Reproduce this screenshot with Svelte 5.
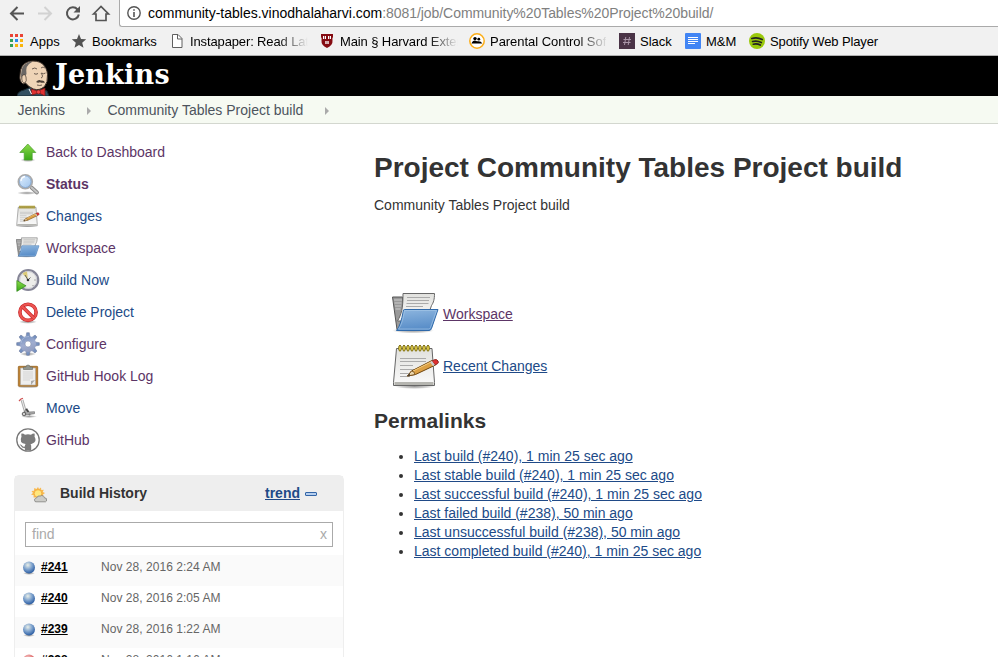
<script>
  const bookmarks = [
    { icon: 'apps', label: 'Apps', w: 62 },
    { icon: 'star', label: 'Bookmarks', w: 98, ls: -0.02 },
    { icon: 'page', label: 'Instapaper: Read Lat', w: 150, fade: true, ls: -0.13 },
    { icon: 'shield', label: 'Main § Harvard Exter', w: 150, fade: true, ls: -0.11 },
    { icon: 'people', label: 'Parental Control Sof', w: 150, fade: true, ls: -0.04 },
    { icon: 'slack', label: 'Slack', w: 66 },
    { icon: 'doc', label: 'M&M', w: 64 },
    { icon: 'spotify', label: 'Spotify Web Player', w: 160, ls: -0.13 }
  ];
  const tasks = [
    { icon: 'up', label: 'Back to Dashboard', visited: true },
    { icon: 'search', label: 'Status', visited: true, bold: true },
    { icon: 'notepad', label: 'Changes' },
    { icon: 'folder', label: 'Workspace', visited: true },
    { icon: 'clock', label: 'Build Now' },
    { icon: 'stop', label: 'Delete Project' },
    { icon: 'gear', label: 'Configure', visited: true },
    { icon: 'clipboard', label: 'GitHub Hook Log', visited: true },
    { icon: 'move', label: 'Move' },
    { icon: 'github', label: 'GitHub', visited: true }
  ];
  const builds = [
    { id: '#241', date: 'Nov 28, 2016 2:24 AM', ball: 'blue' },
    { id: '#240', date: 'Nov 28, 2016 2:05 AM', ball: 'blue' },
    { id: '#239', date: 'Nov 28, 2016 1:22 AM', ball: 'blue' },
    { id: '#238', date: 'Nov 28, 2016 1:16 AM', ball: 'red' }
  ];
  const permalinks = [
    'Last build (#240), 1 min 25 sec ago',
    'Last stable build (#240), 1 min 25 sec ago',
    'Last successful build (#240), 1 min 25 sec ago',
    'Last failed build (#238), 50 min ago',
    'Last unsuccessful build (#238), 50 min ago',
    'Last completed build (#240), 1 min 25 sec ago'
  ];
  const appColors = ['#ea4335', '#ea4335', '#ea4335', '#34a05a', '#2a8cf0', '#f9b50b', '#34a05a', '#f9b50b', '#f9b50b'];
</script>

{#snippet folder(size)}
  <svg width={size} height={size} viewBox="0 0 48 48">
    <ellipse cx="21" cy="40.500" rx="21" ry="3" fill="url(#shadow)" />
    <path d="M.5 7h10v32.500H5Z" fill="#999" stroke="#555" />
    <path d="M2 10h8M2.500 13h7M3 16h6M3.500 19h5" stroke="#ccc" />
    <path d="M11 3.500h31.500c0 6-1 9-3 12L34 31H5.500c4-7 5.500-12 5.500-27.500Z" fill="url(#paper)" stroke="#686868" />
    <path d="M15 7.500h23M15 10.500h22M14.500 13.500h22M14 16.500h17" stroke="#aaa" />
    <path d="M11.500 20q.2-.500 1-.500h33.500l-6.500 19q-.7 2-2.500 2H4.500q4-4 7-20.500Z" fill="url(#blueFolder)" stroke="#2f69aa" />
    <path d="M12.500 20.500h32l-6 17q-.5 1.500-2 1.500H6.500q4-5 6-18.500Z" fill="none" stroke="#a6c7e8" opacity=".65" />
  </svg>
{/snippet}

{#snippet notepad(size)}
  <svg width={size} height={size} viewBox="0 0 48 48">
    <ellipse cx="22.500" cy="44.500" rx="20" ry="2.500" fill="url(#shadow)" />
    <path d="M4.500 6.500h35.500l2.500 34v3h-41v-3Z" fill="url(#paper)" stroke="#666" stroke-linejoin="round" />
    <path d="M2.500 41.500h39" stroke="#b5b5b0" stroke-width="3" />
    <path d="M8 16.500h26M8 19.500h26M8 23.500h13M8 27.500h24M8 31.500h18M8 34.500h10" stroke="#aaa" />
    {#each [8, 12, 16, 20, 24, 28, 32, 36] as x}
      <ellipse cx={x} cy="6.200" rx="1.300" ry="3" fill="#f2df54" stroke="#77670c" />
    {/each}
    <path d="m15.500 34 4-5L40 18.500l3.500 4.500-20 9.500Z" fill="#dca044" stroke="#70450d" />
    <path d="m21 29 19-9.500" stroke="#f5ce83" />
    <path d="m15.500 34 4-5q3 0 3.500 3.500Z" fill="#ead5ac" stroke="#70450d" stroke-width=".8" />
    <path d="m15.500 34 2-2.300.7 1.700Z" fill="#333" />
    <path d="m40 19 2.500-1.300q2.500-.5 3.500 1.300t-.5 2.700l-2.500 1.300Z" fill="#df3030" stroke="#8c2720" />
    <path d="m39 19.500 3 4" stroke="#ccc" stroke-width="2.200" />
  </svg>
{/snippet}

{#snippet bookmarkIcon(kind)}
  <svg width="16" height="16" viewBox="0 0 16 16">
    {#if kind === 'apps'}
      {#each appColors as c, i}
        <rect x={1 + (i % 3) * 5} y={1 + Math.floor(i / 3) * 5} width="3" height="3" fill={c} />
      {/each}
    {:else if kind === 'star'}
      <path d="m8 1 2 4.900 5.200.4-4 3.400 1.300 5.100L8 12l-4.500 2.800 1.300-5.100-4-3.400L6 5.900Z" fill="#525252" />
    {:else if kind === 'page'}
      <path d="M3.500 1.500h5.500l4 4v9h-9.500Z" fill="#fff" stroke="#606060" /><path d="M8.500 1.500v4.500h4.500" fill="none" stroke="#606060" />
    {:else if kind === 'shield'}
      <path d="M2 1h12v3q-1 1-.5 3.500Q14 12 8 15 2 12 2.500 7.500 3 5 2 4Z" fill="#850b12" />
      <path d="M4 3h3v3H4Zm5 0h3v3H9ZM6.300 8h3.400v3H6.300Z" fill="#fff" /><path d="M5.500 3v3M10.500 3v3M8 8v3" stroke="#850b12" stroke-width=".7" />
    {:else if kind === 'people'}
      <circle cx="8" cy="8" r="7.200" fill="#fff" stroke="#fcae18" stroke-width="1.500" />
      <circle cx="6" cy="5.600" r="1.700" fill="#000" /><circle cx="9.800" cy="6.200" r="1.400" fill="#000" />
      <path d="M2.500 10.500q1-3 3.500-3l2 .8q4-.8 5.300 2.200Z" fill="#000" />
    {:else if kind === 'slack'}
      <path d="M0 0h16v16H0Z" fill="#4a3346" /><path d="m6.800 4-1.300 8M10.500 4l-1.300 8M4.500 6.500h7.500M4 9.500h7.500" stroke="#a995a7" />
    {:else if kind === 'doc'}
      <rect width="16" height="16" rx="1" fill="#4285f4" /><path d="M3 4.500h10M3 6.500h10M3 8.500h10M3 10.500h7" stroke="#fff" />
    {:else}
      <circle cx="8" cy="8" r="8" fill="#9ac90b" /><path d="M2.800 5.500q5.500-1.700 10.400 1M3.600 8.500q4.500-1.200 8.700 1M4.300 11.200q3.800-1 7 .9" fill="none" stroke="#222" stroke-width="1.700" stroke-linecap="round" />
    {/if}
  </svg>
{/snippet}

{#snippet taskIcon(kind)}
  {#if kind === 'folder'}{@render folder(24)}
  {:else if kind === 'notepad'}{@render notepad(24)}
  {:else}
    <svg width="24" height="24" viewBox="0 0 24 24">
      {#if kind === 'up'}
        <ellipse cx="12" cy="20" rx="7.500" ry="2" fill="url(#shadow)" />
        <path d="m11.800 4 8 8.500h-3.600V20h-8v-7.500H3.800Z" fill="url(#green)" stroke="#4a9d2c" stroke-width=".7" />
      {:else if kind === 'search'}
        <ellipse cx="11" cy="21" rx="10" ry="1.800" fill="url(#shadow)" />
        <path d="m15.500 15.500 5.500 5" stroke="#888" stroke-width="3.800" stroke-linecap="round" /><path d="m15.500 15.500 5.500 5" stroke="#c4c4c4" stroke-width="2" stroke-linecap="round" />
        <circle cx="9.300" cy="9.700" r="7" fill="url(#lens)" stroke="#aaa" stroke-width="1.600" /><circle cx="9.300" cy="9.700" r="5.800" fill="none" stroke="#7798c2" stroke-width=".7" />
        <path d="M5 9q0-4 4-4.500" stroke="#fff" fill="none" stroke-width="1.300" />
      {:else if kind === 'clock'}
        <circle cx="12.200" cy="12" r="10" fill="#ededea" stroke="#858596" stroke-width="2.200" /><circle cx="12.200" cy="12" r="8.500" fill="none" stroke="#cbcbd3" />
        <path d="M12 12 6.500 5.500q2-2 4.500-2Z" fill="#dccb78" /><path d="m9 7 3 5 2.500-2.500M18.500 12h1M16.500 17l.7.700" stroke="#666" fill="none" /><circle cx="12" cy="12" r="1.300" fill="#333" />
        <path d="m.8 12.500 9.300 5.300-9.300 5.600Z" fill="url(#green)" stroke="#267f12" stroke-width=".6" />
      {:else if kind === 'stop'}
        <ellipse cx="12" cy="21.800" rx="9" ry="2" fill="url(#shadow)" /><circle cx="12" cy="12.300" r="8.100" fill="#fff" stroke="#c3272b" stroke-width="3.600" /><circle cx="12" cy="12.300" r="8.100" fill="none" stroke="#ed5551" stroke-width="2.300" /><path d="m6.500 6.800 11 11" stroke="#c51e24" stroke-width="3.500" /><path d="m6.300 6.600 11.400 11.400" stroke="#ed5551" stroke-width="2.300" />
      {:else if kind === 'gear'}
        <ellipse cx="12" cy="22" rx="8" ry="2" fill="url(#shadow)" />
        <g fill="url(#gearFill)" stroke="#7582a3" stroke-width=".6">
          {#each [0, 45, 90, 135, 180, 225, 270, 315] as a}<path d="m10 5 .7-4.300h2.600L14 5Z" transform={`rotate(${a} 12 12)`} />{/each}
        </g>
        <circle cx="12" cy="12" r="5.500" fill="none" stroke="url(#gearFill)" stroke-width="5.200" /><path d="M5 11Q6 4.500 13 4.500" stroke="#b4c2de" fill="none" stroke-width=".7" /><circle cx="12" cy="12" r="3" fill="#fff" stroke="#7d8aab" stroke-width=".6" />
      {:else if kind === 'clipboard'}
        <ellipse cx="12" cy="22.800" rx="10" ry="1.200" fill="#000" opacity=".2" /><rect x="2.300" y="2.300" width="19.400" height="20" rx=".7" fill="#bd8132" stroke="#8f5c19" stroke-width=".7" /><path d="M4.500 4h15v17h-15Z" fill="#eee" stroke="#aaa" stroke-width=".6" /><path d="M7 8h10M7 10h10M7 12h10M7 14h10M7 16h7" stroke="#d5d5d5" /><path d="m19 16-4 1v4Z" fill="#aaa" /><path d="M7.500 5.500V3h2.500Q10 1 12 1t2 2h2.500v2.500Z" fill="#92968f" stroke="#666b63" stroke-width=".6" />
      {:else if kind === 'move'}
        <ellipse cx="13" cy="20.500" rx="8" ry="1.500" fill="url(#shadow)" /><path d="m6 4 3.500 12" stroke="#aaa" stroke-width="2.800" /><path d="m6 4 3.500 12" stroke="#eee" stroke-width="1" /><path d="m3 5 2-2 2-.7" fill="none" stroke="#cf5050" stroke-width="1.200" /><path d="m8.500 15 2.500-2.500 2 3.500 5.500-.3v2L9 19Z" fill="#aaa" stroke="#666" stroke-width=".6" /><path d="m10 13 2.500 3" stroke="#444" stroke-width="1.500" /><circle cx="8" cy="18" r="1.800" fill="#ccc" stroke="#444" stroke-width=".8" /><circle cx="13.500" cy="18.500" r="1" fill="#777" />
      {:else}
        <circle cx="12" cy="12" r="11.200" fill="#fff" stroke="#777" stroke-width="1.300" /><path d="M5.500 5.500q2-.2 3.500 1.200 3-.7 6 0Q16.500 5.300 18.500 5.500q.5 1.500 0 3 3 5.500-2.500 7.200-.7.300-1.500.300.700.8.700 2v4.500H8.800V20Q6 20.500 5 18q-.5-1-1.500-1.500 2-.5 3 1.500.8 1 2.300.5 0-1.500.8-2.500-7-.8-4.100-7.500-.5-1.500 0-3Z" fill="#7b7b7b" />
      {/if}
    </svg>
  {/if}
{/snippet}

<svg class="defs" width="0" height="0">
  <defs>
    <linearGradient id="paper" x1="0" y1="0" x2="0" y2="1"><stop stop-color="#e1e1de" /><stop offset="1" stop-color="#fafafa" /></linearGradient>
    <linearGradient id="blueFolder" x1="0" y1="0" x2=".2" y2="1"><stop stop-color="#8eb6df" /><stop offset="1" stop-color="#588dc8" /></linearGradient>
    <linearGradient id="green" x1="0" y1="0" x2="0" y2="1"><stop stop-color="#8cd94a" /><stop offset="1" stop-color="#39a919" /></linearGradient>
    <linearGradient id="lens" x1="0" y1="0" x2="1" y2="1"><stop stop-color="#e1f0ff" /><stop offset="1" stop-color="#9cc2eb" /></linearGradient>
    <linearGradient id="gearFill" gradientUnits="userSpaceOnUse" x1="8" y1="0" x2="16" y2="24"><stop stop-color="#6686b8" /><stop offset=".5" stop-color="#a0add0" /><stop offset="1" stop-color="#8892b4" /></linearGradient>
    <radialGradient id="blue" cx=".4" cy=".3" r=".75"><stop stop-color="#e8eee8" /><stop offset=".5" stop-color="#7ba0cc" /><stop offset="1" stop-color="#1e529c" /></radialGradient>
    <radialGradient id="red" cx=".4" cy=".3" r=".75"><stop stop-color="#f2c9c9" /><stop offset=".5" stop-color="#e57c7c" /><stop offset="1" stop-color="#b73333" /></radialGradient>
    <radialGradient id="shadow"><stop stop-opacity=".4" /><stop offset=".6" stop-opacity=".2" /><stop offset="1" stop-opacity="0" /></radialGradient>
  </defs>
</svg>

<div class="screen">
  <div class="toolbar">
    <svg class="nav" width="119" height="27" viewBox="0 0 119 27" fill="none" stroke-width="2">
      <path d="M24 13.500H11M17.500 7l-6.500 6.500 6.500 6.500" stroke="#555" />
      <path d="M38 13.500h13M44.500 7l6.500 6.500-6.500 6.500" stroke="#d2d2d2" />
      <path d="M77.500 9.500a6 6 0 1 0 1.300 5" stroke="#555" /><path d="M80 6v6.500h-6.500Z" fill="#555" />
      <path d="m93.500 14 7.500-7.500 7.500 7.500h-2.500v6.500h-10v-6.500Z" stroke="#555" stroke-width="1.700" />
    </svg>
    <div class="omnibox">
      <svg width="14" height="14" viewBox="0 0 14 14"><circle cx="7" cy="7" r="6.200" fill="none" stroke="#555" stroke-width="1.400" /><path d="M7 3.200v1.600M7 6v5" stroke="#555" stroke-width="1.600" /></svg>
      <span class="url">community-tables.vinodhalaharvi.com<span class="path">:8081/job/Community%20Tables%20Project%20build/</span></span>
    </div>
  </div>
  <div class="bookmarks">
    {#each bookmarks as b}
      <div class="bookmark" style:width={`${b.w}px`}>
        {@render bookmarkIcon(b.icon)}<span class:fade={b.fade} style:letter-spacing={`${b.ls ?? 0}px`}>{b.label}</span>
      </div>
    {/each}
  </div>
  <header>
    <svg width="34" height="40" viewBox="0 0 34 40">
      <path d="M0 40q1-5 7-6l7-3 11 2 5 2 2 5Z" fill="#335061" stroke="#182830" />
      <path d="M6 28Q2 25 3 19 3 8 12 5.500q8-1.500 13 2 5 4 5.500 11 .5 8-3 12-5 4.500-11 2.500-5-2-8-6Z" fill="#efd4b7" stroke="#3f342d" stroke-width="1" />
      <path d="M4 19Q4 9 11 6.500 14 5 15 6 8 9 9.500 18L7 22l-2 2Z" fill="#6b6764" /><path d="M5 20q3-3 4 1t-1 6Q4 27 5 20Z" fill="#efd4b7" stroke="#3f342d" stroke-width=".7" />
      <path d="M15 13q3-2 5 0M24 12q2-2 4 0M17 17.500q2 1.500 4 0M24.500 17q2 1.500 4 0M24 17q3 4 0 5M20 29q3 1 5 0" fill="none" stroke="#4d4038" stroke-width=".8" />
      <path d="M19 26q2.500-3 5-1.500 3-.5 4 2-3 .8-5-.3-2 1-4-.2Z" fill="#4d4038" />
      <path d="m14 33 7 2 7-3v8l-6-3-7 2Z" fill="#df3030" stroke="#70191b" stroke-width=".8" /><circle cx="21.500" cy="36" r="2" fill="#f34242" stroke="#70191b" stroke-width=".6" />
      <path d="m12 33 2.500 5" stroke="#fff" />
    </svg>
    <span class="logo">Jenkins</span>
  </header>
  <nav class="crumbs">
    <span>Jenkins</span><i></i><span>Community Tables Project build</span><i></i>
  </nav>
  <div class="columns">
    <aside>
      <div class="tasks">
        {#each tasks as t}
          <div class="task" class:visited={t.visited} class:bold={t.bold}>{@render taskIcon(t.icon)}<span>{t.label}</span></div>
        {/each}
      </div>
      <section class="history">
        <div class="pane-head">
          <svg width="18" height="18" viewBox="0 0 18 18">
            <path d="m8 1 1 2 2-1.500.3 2.500 2.500-.3-1 2.300 2.200 1-2 1.500.5 3H3.500l.2-2.300-2.700-.7 2-1.500-1.500-2 2.500-.3.300-2.700L6.500 3Z" fill="#f8b94e" /><circle cx="8" cy="7.500" r="3.800" fill="#ffe77d" stroke="#f3a63b" stroke-width=".8" />
            <path d="M5 15.500q-1.500-3 1.500-3.500 1-2.800 4-2 1-1.200 3 .2 1 .4.800 1.500 3 0 2.200 3.300l-1 .8H6Z" fill="#ccccc8" stroke="#80807c" stroke-width=".8" />
          </svg>
          <b>Build History</b><span class="trend">trend</span>
          <svg class="minus" width="12" height="4" viewBox="0 0 12 4"><rect x=".5" y=".5" width="11" height="3" rx=".5" fill="#b6cfef" stroke="#3264a6" /></svg>
        </div>
        <div class="find"><span>find</span><span>x</span></div>
        {#each builds as b}
          <div class="build">
            <svg width="14" height="14" viewBox="0 0 14 14"><ellipse cx="7" cy="12.300" rx="6" ry="1.600" fill="url(#shadow)" /><circle cx="7" cy="6.500" r="6" fill={`url(#${b.ball})`} /></svg>
            <span class="num">{b.id}</span><span class="date">{b.date}</span>
          </div>
        {/each}
      </section>
    </aside>
    <main>
      <h1>Project Community Tables Project build</h1>
      <p>Community Tables Project build</p>
      <div class="big visited">{@render folder(48)}<span>Workspace</span></div>
      <div class="big">{@render notepad(48)}<span>Recent Changes</span></div>
      <h2>Permalinks</h2>
      <ul>
        {#each permalinks as p}<li><span>{p}</span></li>{/each}
      </ul>
    </main>
  </div>
</div>

<style>
  :global(body) { overflow: hidden; }
  svg { display: block; flex: none; }
  .defs { position: absolute; }
  .screen { width: 998px; height: 657px; overflow: hidden; background: #fff; font: 14px/19px "Liberation Sans", Arial, sans-serif; color: #333; white-space: nowrap; }
  .toolbar { display: flex; height: 27px; background: #f1f1f1; }
  .omnibox { box-sizing: border-box; flex: 1; display: flex; align-items: center; gap: 7px; height: 27px; padding-left: 7px; background: #fff; border-left: 1px solid #aaa; border-bottom: 1px solid #aaa; border-bottom-left-radius: 3px; }
  .url { font-size: 14px; color: #000; }
  .path { color: #808080; letter-spacing: -.06px; }
  .bookmarks { box-sizing: border-box; display: flex; height: 29px; padding-left: 9px; background: #f1f1f1; border-bottom: 1px solid #b0b0b0; font-size: 13px; color: #000; }
  .bookmark { display: flex; align-items: center; gap: 5px; flex: none; height: 28px; }
  .fade { mask-image: linear-gradient(to right, #000 0, #000 88px, transparent 118px); }
  header { display: flex; height: 40px; padding-left: 17px; background: #000; }
  .logo { margin-left: 4px; font: bold 27px/38px "DejaVu Serif", serif; letter-spacing: .2px; color: #fff; }
  .crumbs { box-sizing: border-box; height: 28px; display: flex; align-items: center; padding: 1px 0 0 17.500px; background: #f6faf2; border-bottom: 1px solid #d3d7cf; color: #4d545d; }
  .crumbs i { border: 4px solid transparent; border-left-color: #aaa; border-right: 0; margin: 1px 16.500px 0 22px; }
  .columns { display: flex; }
  aside { width: 374px; flex: none; padding-top: 12px; }
  .tasks { padding-left: 16px; }
  .task { display: flex; align-items: center; gap: 6px; height: 32px; color: #204a87; }
  .visited { color: #5c3566 !important; }
  .bold { font-weight: bold; }
  .history { box-sizing: border-box; width: 330px; margin: 19px 0 0 14px; border: 1px solid #eee; border-radius: 5px 5px 0 0; }
  .pane-head { display: flex; align-items: center; height: 35px; padding-left: 15px; background: #eee; }
  .pane-head b { width: 205px; margin-left: 12px; }
  .pane-head svg { margin-top: 2px; }
  .trend { font-weight: bold; text-decoration: underline; color: #204a87; }
  .pane-head .minus { margin: 1px 0 0 5px; }
  .find { display: flex; justify-content: space-between; align-items: center; box-sizing: border-box; height: 25px; margin: 11px 10px 8px; padding: 0 5px 0 6px; border: 1px solid #aaa; color: #aaa; }
  .build { display: flex; align-items: center; height: 31px; padding: 0 0 7px 7px; box-sizing: border-box; font-size: 12px; color: #666; }
  .build:nth-child(odd) { background: #fafafa; }
  .build svg { margin-top: 1px; }
  .num { width: 60px; margin-left: 5px; font-weight: bold; text-decoration: underline; color: #000; }
  .date { letter-spacing: .04px; }
  h1 { margin: 27px 0 0; font-size: 28px; line-height: 34px; }
  p { margin: 11px 0 75px; }
  .big { display: flex; align-items: center; height: 48px; margin: 0 0 4px 18px; gap: 3px; color: #204a87; }
  .big span, li span { text-decoration: underline; }
  h2 { margin: 17px 0 0; font-size: 21px; line-height: 28px; }
  ul { margin: 12px 0 0; padding-left: 40px; }
  li span { color: #204a87; }
</style>
